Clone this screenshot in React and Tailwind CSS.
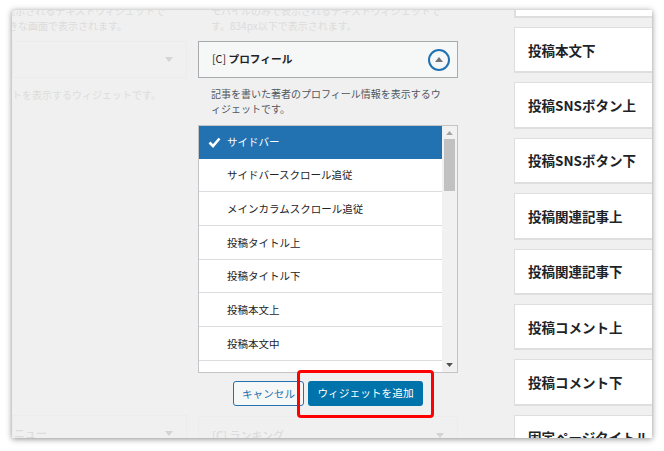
const font = { fontFamily: '"Noto Sans CJK JP", "Noto Sans", sans-serif' };

const items = ['サイドバースクロール追従', 'メインカラムスクロール追従', '投稿タイトル上', '投稿タイトル下', '投稿本文上', '投稿本文中'];
const areas = ['投稿本文下', '投稿SNSボタン上', '投稿SNSボタン下', '投稿関連記事上', '投稿関連記事下', '投稿コメント上', '投稿コメント下', '固定ページタイトル'];

function Caret({ className }) {
  return (
    <svg width="10" height="6" viewBox="0 0 10 6" className={className}>
      <path d="M0 0h10L5 6z" fill="currentColor" />
    </svg>
  );
}

export default function App() {
  return (
    <div className="h-[451px] w-[664px] overflow-hidden bg-white pt-[10px] pl-[12px]" style={font}>
      <div className="relative flex h-[428px] w-[640px] overflow-hidden bg-[#f0f0f0] shadow-[0_1px_6px_rgba(0,0,0,0.45)]">
        <div className="flex w-[175px] shrink-0 flex-col items-end overflow-hidden text-[10px] leading-[14.5px] text-[#dcdcdc]">
          <p className="mt-[-6px] shrink-0 pr-[22px] whitespace-nowrap">に表示されるテキストウィジェットで</p>
          <p className="shrink-0 pr-[60px] whitespace-nowrap">大きな画面で表示されます。</p>
          <div className="mt-[8px] flex h-[37px] w-[175px] shrink-0 items-center justify-end border border-[#ececec] pr-[13px] text-[#d4d4d4]">
            <Caret className="h-[5px] w-[8px]" />
          </div>
          <p className="mt-[10px] w-[175px] shrink-0 whitespace-nowrap">トを表示するウィジェットです。</p>
          <div className="mt-[312px] flex h-[38px] w-[175px] shrink-0 items-center justify-between border border-[#ececec] pr-[13px] pl-[1px] text-[#d4d4d4]">
            <span className="text-[11px] font-medium text-[#dcdcdc]">ニュー</span>
            <Caret className="h-[5px] w-[8px]" />
          </div>
        </div>

        <div className="ml-[11px] flex w-[260px] shrink-0 flex-col">
          <div className="mt-[-6px] shrink-0 pl-[13px] text-[10px] leading-[14.5px] whitespace-nowrap text-[#dcdcdc]">
            <p>モバイルのみで表示されるテキストウィジェットで</p>
            <p>す。834px以下で表示されます。</p>
          </div>
          <div className="mt-[8px] flex h-[37px] shrink-0 items-center justify-between border border-[#a7aaad] bg-[#f6f7f7] pr-[7px] pl-[13px]">
            <span className="text-[10.7px] font-bold text-[#1d2327]">
              <span className="font-normal">[C]</span> プロフィール
            </span>
            <span className="flex h-[22px] w-[22px] items-center justify-center rounded-full border-2 border-[#2271b1] text-[#6f7478]">
              <Caret className="h-[5px] w-[8px] rotate-180" />
            </span>
          </div>
          <p className="mt-[9px] shrink-0 pr-[8px] pl-[13px] text-[10px] leading-[14.5px] text-[#50575e]">
            記事を書いた著者のプロフィール情報を表示するウィジェットです。
          </p>
          <div className="mt-[9px] flex h-[248px] shrink-0 overflow-hidden border border-[#c3c4c7] bg-white">
            <ul className="min-w-0 flex-1 text-[10.5px]">
              <li className="flex h-[32.7px] items-center bg-[#2271b1] pl-[9px] text-white">
                <svg width="13" height="11" viewBox="0 0 13 11" className="mr-[6px]">
                  <path d="M1.5 5.5l3.5 3.5 6.5-7.5" fill="none" stroke="currentColor" strokeWidth="2.6" />
                </svg>
                サイドバー
              </li>
              {items.map((t) => (
                <li key={t} className="flex h-[33.7px] items-center border-b border-[#dcdcde] pl-[28px] text-[#1d2327]">
                  {t}
                </li>
              ))}
            </ul>
            <div className="flex w-[15px] shrink-0 flex-col items-center bg-[#f1f1f1] text-[#a3a3a3]">
              <Caret className="mt-[5px] h-[4px] w-[7px] rotate-180" />
              <div className="mt-[4px] h-[52px] w-[11px] bg-[#c1c1c1]" />
              <Caret className="mt-auto mb-[5px] h-[4px] w-[7px] text-[#505050]" />
            </div>
          </div>
          <div className="mt-[8px] flex shrink-0 justify-end gap-[4px] pr-[35px]">
            <button className="h-[25px] w-[71px] rounded-[3px] border border-[#2271b1] bg-[#f6f7f7] text-[10.6px] text-[#2271b1]">キャンセル</button>
            <button className="h-[25px] w-[115px] rounded-[3px] bg-[#0073aa] text-[10.7px] text-white">ウィジェットを追加</button>
          </div>
          <div className="mt-[10px] flex h-[38px] shrink-0 items-center justify-between border border-[#ececec] pr-[13px] pl-[13px] text-[#d4d4d4]">
            <span className="text-[11px] font-medium text-[#dcdcdc]">[C] ランキング</span>
            <Caret className="h-[5px] w-[8px]" />
          </div>
        </div>

        <div className="ml-[56px] w-[150px] shrink-0">
          <div className="mt-[-30px]">
            <div className="mb-[9px] h-[38px] border-b-2 border-l-2 border-[#dedede] bg-white" />
            {areas.map((a) => (
              <div key={a} className="mb-[9px] flex h-[46.4px] items-center border-2 border-r-0 border-t-1 border-l-1 border-[#dedede] bg-white pl-[13px] text-[13.5px] font-bold whitespace-nowrap text-[#1d2327]">
                {a}
              </div>
            ))}
          </div>
        </div>

        <div className="pointer-events-none absolute top-[360px] left-[285px] h-[48px] w-[137px] rounded-[4px] border-[3px] border-[#ff0000]" />
      </div>
    </div>
  );
}
